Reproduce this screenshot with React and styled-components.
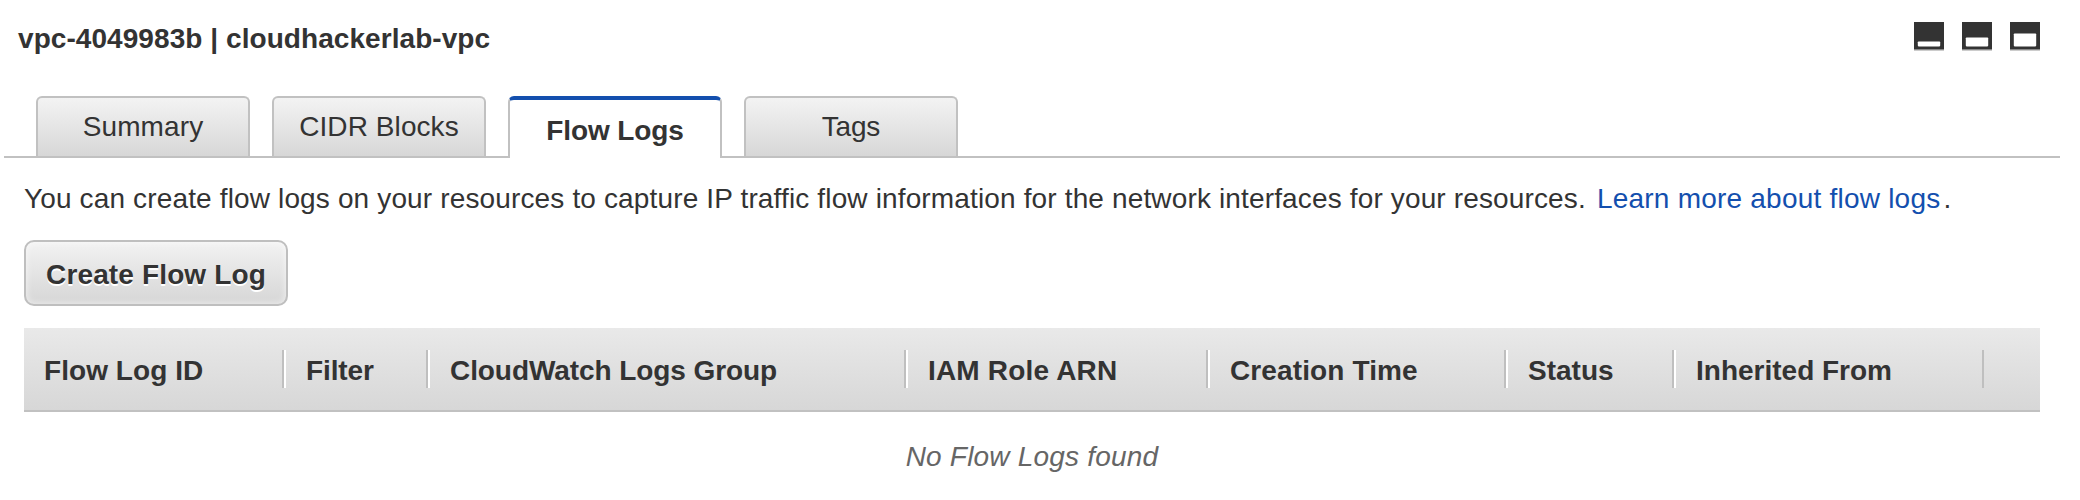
import React from 'react';
import styled, { createGlobalStyle, css } from 'styled-components';

const GlobalStyle = createGlobalStyle`
  *, *::before, *::after { box-sizing: border-box; }
  body {
    margin: 0;
    background: #fff;
    color: #333;
    font: 28px/33px "Liberation Sans", Arial, sans-serif;
  }
`;

const Label = styled.span`
  letter-spacing: ${({ $track = 0 }) => $track}px;
  white-space: nowrap;
`;

const Panel = styled.main`
  width: 2080px;
  height: 500px;
  overflow: hidden;
`;

const Header = styled.header`
  display: flex;
  justify-content: space-between;
  align-items: flex-start;
  height: 96px;
  padding: 22px 40px 0 18px;
`;

const Title = styled.h1`
  margin: 0;
  font-size: inherit;
  font-weight: bold;
`;

const PaneSizes = styled.div`
  display: flex;
  gap: 18px;
`;

const PaneIcon = styled.svg`
  display: block;
  width: 30px;
  height: 29px;
`;

const TabBar = styled.nav`
  display: flex;
  gap: 22px;
  height: 62px;
  margin: 0 20px 0 4px;
  padding-left: 32px;
  border-bottom: 2px solid #c1c1c1;
`;

const Tab = styled.a`
  display: flex;
  justify-content: center;
  width: 214px;
  height: 60px;
  padding-top: 12px;
  border: 2px solid #c1c1c1;
  border-bottom: 0;
  border-radius: 6px 6px 0 0;
  background: linear-gradient(#f3f3f3, #d7d7d7);

  ${({ $active }) =>
    $active &&
    css`
      height: 62px;
      padding-top: 14px;
      border-top: 4px solid #134fae;
      background: #fff;
      font-weight: bold;
    `}
`;

const Content = styled.section`
  padding: 24px 40px 0 24px;
`;

const Intro = styled.p`
  display: flex;
  margin: 0 0 25px;
`;

const Link = styled.a`
  margin: 0 3px 0 11px;
  color: #134fae;
`;

const Button = styled.button`
  display: block;
  width: 264px;
  height: 66px;
  padding: 3px 0 0;
  border: 2px solid #bfbfbf;
  border-radius: 10px;
  background: linear-gradient(#f2f2f2, #d6d6d6);
  box-shadow: inset 0 0 6px 1px rgba(255, 255, 255, 0.55);
  color: inherit;
  font: inherit;
  font-weight: bold;
  text-shadow: 0 2px 0 #fff;
`;

const ColumnBar = styled.div`
  display: flex;
  align-items: flex-start;
  height: 84px;
  margin-top: 22px;
  padding-top: 22px;
  border-bottom: 2px solid #c1c1c1;
  background: linear-gradient(#e9e9e9, #d7d7d7);
`;

const Column = styled.div`
  width: ${({ $width }) => $width}px;
  height: 38px;
  padding: 4px 0 0 20px;
  border-right: 2px solid #bfbfbf;
  font-weight: bold;

  & + & {
    border-left: 2px solid #fff;
  }
`;

const Empty = styled.p`
  display: flex;
  justify-content: center;
  margin: 28px 0 0;
  color: #666;
  font-style: italic;
`;

const paneIcons = [
  { name: 'Minimize', top: 19.5 },
  { name: 'Split', top: 15.5 },
  { name: 'Maximize', top: 11.5 },
];

const tabs = [
  { name: 'Summary', track: 0.118 },
  { name: 'CIDR Blocks', track: 0.08 },
  { name: 'Flow Logs', track: -0.1, active: true },
  { name: 'Tags', track: -0.2 },
];

const columns = [
  { name: 'Flow Log ID', width: 260, track: 0.06 },
  { name: 'Filter', width: 144, track: -0.1 },
  { name: 'CloudWatch Logs Group', width: 478, track: -0.08 },
  { name: 'IAM Role ARN', width: 302, track: 0.18 },
  { name: 'Creation Time', width: 298, track: 0.12 },
  { name: 'Status', width: 168 },
  { name: 'Inherited From', width: 310, track: 0 },
];

export default function App() {
  return (
    <Panel>
      <GlobalStyle />
      <Header>
        <Title>
          <Label $track={0.063}>vpc-4049983b | cloudhackerlab-vpc</Label>
        </Title>
        <PaneSizes>
          {paneIcons.map(({ name, top }) => (
            <PaneIcon key={name} viewBox="0 0 30 29" role="img" aria-label={name}>
              <path fill="#333" d="M0 0h30v27H0z" />
              <path fill="#888" d="M0 27h30v1H0z" />
              <path fill="#ccc" d="M0 28h30v1H0z" />
              <rect x="3.8" y={top} width="22.4" height={24.4 - top} rx="0.8" fill="#fff" />
            </PaneIcon>
          ))}
        </PaneSizes>
      </Header>
      <TabBar>
        {tabs.map(({ name, track, active }) => (
          <Tab key={name} $active={active}>
            <Label $track={track}>{name}</Label>
          </Tab>
        ))}
      </TabBar>
      <Content>
        <Intro>
          <Label $track={0.145}>
            You can create flow logs on your resources to capture IP traffic flow information for the
            network interfaces for your resources.
          </Label>
          <Link>
            <Label $track={0.22}>Learn more about flow logs</Label>
          </Link>
          .
        </Intro>
        <Button>
          <Label $track={0.14}>Create Flow Log</Label>
        </Button>
        <ColumnBar>
          {columns.map(({ name, width, track }) => (
            <Column key={name} $width={width}>
              <Label $track={track}>{name}</Label>
            </Column>
          ))}
        </ColumnBar>
        <Empty>
          <Label $track={0.2}>No Flow Logs found</Label>
        </Empty>
      </Content>
    </Panel>
  );
}
